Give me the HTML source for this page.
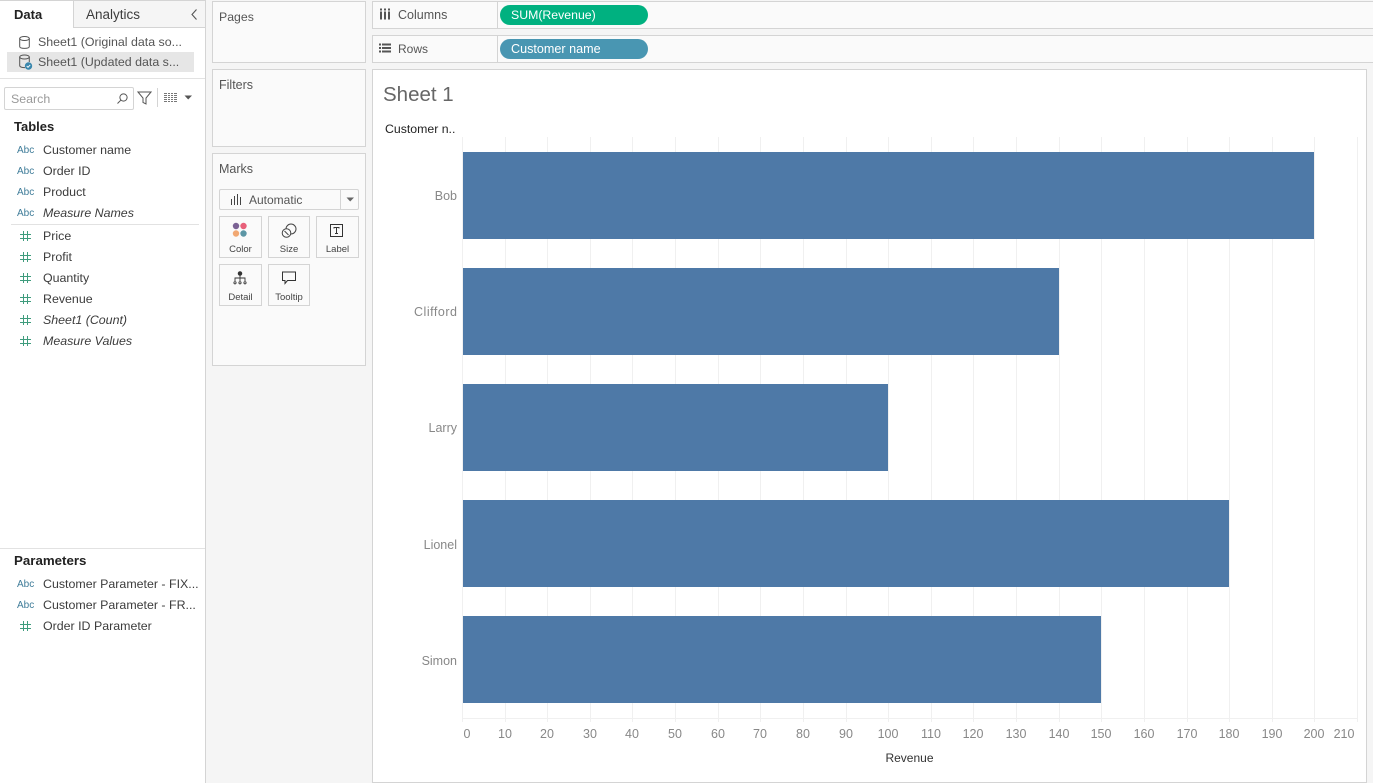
<!DOCTYPE html>
<html><head><meta charset="utf-8"><title>Sheet 1</title>
<style>
html,body{margin:0;padding:0;background:#f5f5f5}
body{width:1373px;height:783px;position:relative;overflow:hidden;font-family:"Liberation Sans",sans-serif;color:#3c3c3c;font-size:12.4px}
.b{position:absolute;box-sizing:border-box}
.t{position:absolute;white-space:nowrap;line-height:16px;height:16px}
.h{font-size:13px;font-weight:bold;color:#222}
.p{position:absolute;box-sizing:border-box;background:#fafafa;border:1px solid #d4d4d4}
.abc{position:absolute;left:17px;font-size:10px;color:#3f7c99;line-height:12px;white-space:nowrap}
.n{position:absolute;left:0;top:0}
.i{font-style:italic}
.btn{position:absolute;box-sizing:border-box;background:#fafafa;border:1px solid #d4d4d4;width:43px;height:42px}
.btn span{position:absolute;left:0;right:0;text-align:center;top:27px;font-size:9.5px;line-height:12px;color:#444}
.pill{position:absolute;left:500px;width:148px;height:20px;border-radius:10px;color:#fff;line-height:20px;padding-left:11px;box-sizing:border-box}
</style></head><body>

<!-- Left pane -->
<div class="b" style="left:0;top:0;width:206px;height:783px;background:#fff;border-right:1px solid #d4d4d4"></div>
<div class="b" style="left:73px;top:1px;width:132px;height:27px;background:#f5f5f5;border-left:1px solid #d4d4d4;border-bottom:1px solid #d4d4d4"></div>
<div class="b" style="left:0;top:0;width:205px;height:1px;background:#d4d4d4"></div>
<div class="t h" style="left:14px;top:7px">Data</div>
<div class="t" style="left:86px;top:7px;font-size:13.5px">Analytics</div>
<svg class="n" style="left:190px;top:8px" width="10" height="13"><path d="M6.5 1.500 L2 6.500 L6.500 11.500" fill="none" stroke="#555" stroke-width="1.100"/></svg>

<div class="b" style="left:7px;top:52px;width:187px;height:20px;background:#e6e6e6"></div>
<svg class="n" style="left:18px;top:35px" width="14" height="16" fill="none" stroke="#555" stroke-width="1"><ellipse cx="6.500" cy="3.500" rx="4.800" ry="2"/><path d="M1.700 3.500V11.500C1.700 14 11.300 14 11.300 11.500V3.500"/></svg>
<svg class="n" style="left:18px;top:54px" width="16" height="18" fill="none" stroke="#555" stroke-width="1"><ellipse cx="6.500" cy="3" rx="4.800" ry="2"/><path d="M1.700 3V11.500C1.700 13.300 5 13.700 7 13.600M11.300 3V8"/><circle cx="10.500" cy="12" r="3.700" fill="#3a87ad" stroke="none"/><path d="M8.700 12l1.300 1.300 2.200-2.400" stroke="#fff" stroke-width="0.900"/></svg>
<div class="t" style="left:38px;top:34px;color:#555">Sheet1 (Original data so...</div>
<div class="t" style="left:38px;top:54px;color:#555">Sheet1 (Updated data s...</div>
<div class="b" style="left:0;top:78px;width:205px;height:1px;background:#e2e2e2"></div>

<div class="b" style="left:4px;top:87px;width:130px;height:23px;border:1px solid #d4d4d4;border-radius:2px;background:#fff"></div>
<div class="t" style="left:11px;top:91px;color:#9a9a9a">Search</div>
<svg class="n" style="left:116px;top:92px" width="13" height="13" fill="none" stroke="#555" stroke-width="1"><circle cx="7.500" cy="5.500" r="3.600"/><path d="M4.800 8.200L1.500 11.500"/></svg>
<svg class="n" style="left:137px;top:91px" width="15" height="14" fill="none" stroke="#555" stroke-width="1"><path d="M1 1H14L9 7V13L6 11.500V7Z"/></svg>
<div class="b" style="left:157px;top:88px;width:1px;height:19px;background:#d4d4d4"></div>
<svg class="n" style="left:164px;top:93px" width="14" height="10" stroke="#777" stroke-width="1"><path d="M0 .5H13M0 2.500H13M0 4.500H13M0 6.500H13M0 8.500H13" /><path d="M3.500 0V9M6.500 0V9M9.500 0V9" stroke="#fff"/></svg>
<svg class="n" style="left:184px;top:95px" width="9" height="6"><path d="M0.500 0.500H8L4.200 4.500Z" fill="#555"/></svg>

<div class="t h" style="left:14px;top:119px">Tables</div>

<div class="abc" style="top:145px">Abc</div><div class="t" style="left:43px;top:142px">Customer name</div>
<div class="abc" style="top:166px">Abc</div><div class="t" style="left:43px;top:163px">Order ID</div>
<div class="abc" style="top:187px">Abc</div><div class="t" style="left:43px;top:184px">Product</div>
<div class="abc" style="top:208px">Abc</div><div class="t i" style="left:43px;top:205px">Measure Names</div>
<div class="b" style="left:11px;top:224px;width:188px;height:1px;background:#e2e2e2"></div>

<svg class="n" style="left:0;top:0" width="40" height="640" fill="none" stroke="#3f9c7d" stroke-width="1">
<path d="M23.500 231V241M27.500 231V241M20 234.500H31M20 238.500H31"/>
<path d="M23.500 252V262M27.500 252V262M20 255.500H31M20 259.500H31"/>
<path d="M23.500 273V283M27.500 273V283M20 276.500H31M20 280.500H31"/>
<path d="M23.500 294V304M27.500 294V304M20 297.500H31M20 301.500H31"/>
<path d="M23.500 315V325M27.500 315V325M20 318.500H31M20 322.500H31"/>
<path d="M23.500 336V346M27.500 336V346M20 339.500H31M20 343.500H31"/>
<path d="M23.500 621V631M27.500 621V631M20 624.500H31M20 628.500H31"/>
</svg>
<div class="t" style="left:43px;top:228px">Price</div>
<div class="t" style="left:43px;top:249px">Profit</div>
<div class="t" style="left:43px;top:270px">Quantity</div>
<div class="t" style="left:43px;top:291px">Revenue</div>
<div class="t i" style="left:43px;top:312px">Sheet1 (Count)</div>
<div class="t i" style="left:43px;top:333px">Measure Values</div>

<div class="b" style="left:0;top:548px;width:205px;height:1px;background:#e2e2e2"></div>
<div class="t h" style="left:14px;top:553px;font-size:13.300px">Parameters</div>
<div class="abc" style="top:579px">Abc</div><div class="t" style="left:43px;top:576px">Customer Parameter - FIX...</div>
<div class="abc" style="top:600px">Abc</div><div class="t" style="left:43px;top:597px">Customer Parameter - FR...</div>
<div class="t" style="left:43px;top:618px">Order ID Parameter</div>

<!-- Middle cards -->
<div class="p" style="left:212px;top:1px;width:154px;height:62px"></div>
<div class="t" style="left:219px;top:9px;color:#555;font-size:12.300px">Pages</div>
<div class="p" style="left:212px;top:69px;width:154px;height:78px"></div>
<div class="t" style="left:219px;top:77px;color:#555;font-size:12.500px">Filters</div>
<div class="p" style="left:212px;top:153px;width:154px;height:213px"></div>
<div class="t" style="left:219px;top:161px;color:#555;font-size:12.500px">Marks</div>

<div class="b" style="left:219px;top:189px;width:140px;height:21px;background:#fafafa;border:1px solid #d4d4d4;border-radius:2px"></div>
<div class="b" style="left:340px;top:190px;width:1px;height:19px;background:#d4d4d4"></div>
<svg class="n" style="left:230px;top:193px" width="13" height="13" stroke="#444" stroke-width="1"><path d="M1.500 6V12M4.500 3V12M7.500 1V12M10.500 4V12"/></svg>
<div class="t" style="left:249px;top:192px;color:#555;font-size:12px">Automatic</div>
<svg class="n" style="left:346px;top:197px" width="9" height="6"><path d="M0.500 0.500H8L4.200 4.500Z" fill="#666"/></svg>

<div class="btn" style="left:219px;top:216px"><span>Color</span></div>
<svg class="n" style="left:232px;top:222px" width="16" height="16"><circle cx="4" cy="4" r="3.200" fill="#7b6294"/><circle cx="11.500" cy="4" r="3.200" fill="#e8607a"/><circle cx="4" cy="11.500" r="3.200" fill="#f1a873"/><circle cx="11.500" cy="11.500" r="3.200" fill="#5c96a5"/></svg>
<div class="btn" style="left:268px;top:216px;width:42px"><span>Size</span></div>
<svg class="n" style="left:281px;top:223px" width="17" height="16" fill="none" stroke="#444" stroke-width="1"><circle cx="10" cy="6" r="5"/><circle cx="5.500" cy="10" r="4.300" fill="#fafafa"/><path d="M3.500 8l4 4"/></svg>
<div class="btn" style="left:316px;top:216px"><span>Label</span></div>
<svg class="n" style="left:330px;top:224px" width="14" height="14" fill="none" stroke="#333" stroke-width="1"><rect x="0.500" y="0.500" width="12" height="12"/><path d="M4 4.500V3.500H9V4.500M6.500 3.500V9.500M5 9.500H8"/></svg>
<div class="btn" style="left:219px;top:264px"><span>Detail</span></div>
<svg class="n" style="left:233px;top:271px" width="15" height="16" fill="none" stroke="#333" stroke-width="0.900"><circle cx="7" cy="2.500" r="1.800" fill="#333"/><path d="M7 4V7M2 10V7H12V10M7 7V10"/><circle cx="2" cy="11.800" r="1.100"/><circle cx="7" cy="11.800" r="1.100"/><circle cx="12" cy="11.800" r="1.100"/></svg>
<div class="btn" style="left:268px;top:264px;width:42px"><span>Tooltip</span></div>
<svg class="n" style="left:281px;top:271px" width="16" height="15" fill="none" stroke="#333" stroke-width="1"><path d="M1.500 1H14.500V9.500H6.500L4 12.500V9.500H1.500Z"/></svg>

<!-- Shelves -->
<div class="p" style="left:372px;top:1px;width:1002px;height:28px"></div>
<div class="b" style="left:497px;top:2px;width:1px;height:26px;background:#d4d4d4"></div>
<svg class="n" style="left:380px;top:8px" width="11" height="13" fill="#555"><rect x="0" y="3.500" width="2" height="8"/><rect x="4" y="3.500" width="2" height="8"/><rect x="8" y="3.500" width="2" height="8"/><rect x="0" y="0.500" width="2" height="2"/><rect x="4" y="0.500" width="2" height="2"/><rect x="8" y="0.500" width="2" height="2"/></svg>
<div class="t" style="left:398px;top:7px;color:#555;font-size:12.500px">Columns</div>
<div class="pill" style="top:5px;background:#00b180;font-size:12.300px">SUM(Revenue)</div>

<div class="p" style="left:372px;top:35px;width:1002px;height:28px"></div>
<div class="b" style="left:497px;top:36px;width:1px;height:26px;background:#d4d4d4"></div>
<svg class="n" style="left:379px;top:43px" width="13" height="11" fill="#555"><rect x="0" y="0.500" width="2" height="2"/><rect x="3" y="0.500" width="9" height="2"/><rect x="0" y="4" width="2" height="2"/><rect x="3" y="4" width="9" height="2"/><rect x="0" y="7.500" width="2" height="2"/><rect x="3" y="7.500" width="9" height="2"/></svg>
<div class="t" style="left:398px;top:41px;color:#555;font-size:12px">Rows</div>
<div class="pill" style="top:39px;background:#4996b2;font-size:12.600px">Customer name</div>

<!-- Sheet -->
<div class="b" style="left:372px;top:69px;width:995px;height:714px;background:#fff;border:1px solid #d4d4d4"></div>
<div class="t" style="left:383px;top:82px;font-size:20.500px;line-height:26px;height:26px;color:#666">Sheet 1</div>
<div class="t" style="left:385px;top:121px;font-size:12.300px;color:#222">Customer n..</div>

<svg class="n" style="left:0;top:0" width="1373" height="783">
<g stroke="#f0f0f0" stroke-width="1" fill="none">
<path d="M462.500 137V722M505.500 137V722M547.500 137V722M590.500 137V722M632.500 137V722M675.500 137V722M718.500 137V722M760.500 137V722M803.500 137V722M846.500 137V722M888.500 137V722M931.500 137V722M973.500 137V722M1016.500 137V722M1059.500 137V722M1101.500 137V722M1144.500 137V722M1187.500 137V722M1229.500 137V722M1272.500 137V722M1314.500 137V722M1357.500 137V722"/>
<path d="M463 718.500H1357"/>
</g>
<g fill="#4e79a7">
<rect x="463" y="152" width="851" height="87"/>
<rect x="463" y="268" width="596" height="87"/>
<rect x="463" y="384" width="425" height="87"/>
<rect x="463" y="500" width="766" height="87"/>
<rect x="463" y="616" width="638" height="87"/>
</g>
<g font-family="Liberation Sans, sans-serif" font-size="12.500" fill="#888" text-anchor="end">
<text x="457" y="200">Bob</text>
<text x="457" y="316" textLength="43">Clifford</text>
<text x="457" y="432">Larry</text>
<text x="457" y="549">Lionel</text>
<text x="457" y="665">Simon</text>
</g>
<g font-family="Liberation Sans, sans-serif" font-size="12.500" fill="#888" text-anchor="middle">
<text x="467" y="738">0</text><text x="505" y="738">10</text><text x="547" y="738">20</text><text x="590" y="738">30</text><text x="632" y="738">40</text><text x="675" y="738">50</text><text x="718" y="738">60</text><text x="760" y="738">70</text><text x="803" y="738">80</text><text x="846" y="738">90</text><text x="888" y="738">100</text><text x="931" y="738">110</text><text x="973" y="738">120</text><text x="1016" y="738">130</text><text x="1059" y="738">140</text><text x="1101" y="738">150</text><text x="1144" y="738">160</text><text x="1187" y="738">170</text><text x="1229" y="738">180</text><text x="1272" y="738">190</text><text x="1314" y="738">200</text><text x="1344" y="738">210</text>
</g>
<text x="909.500" y="762" font-family="Liberation Sans, sans-serif" font-size="12" fill="#333" text-anchor="middle">Revenue</text>
</svg>
</body></html>
